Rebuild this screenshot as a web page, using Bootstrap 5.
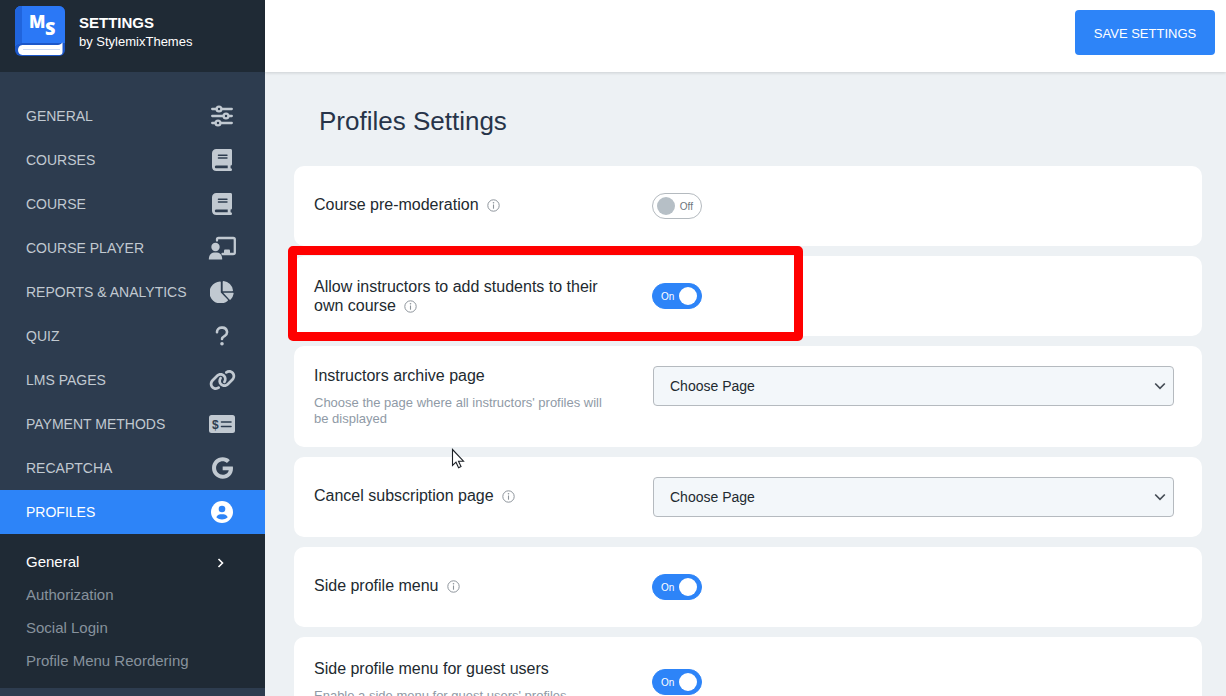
<!DOCTYPE html>
<html lang="en">
<head>
<meta charset="utf-8">
<meta name="viewport" content="width=device-width, initial-scale=1">
<title>Profiles Settings</title>
<link href="https://cdn.jsdelivr.net/npm/bootstrap@5.3.0/dist/css/bootstrap.min.css" rel="stylesheet">
<style>
  :root { --blue: #2d84f8; --side: #2d3c4f; --side-dark: #1f2a35; --muted: #c1c9d1; }
  body { font-family: "Liberation Sans", Arial, sans-serif; background: #edf1f4; color: #222a30; }

  .sidebar { width: 265px; background: var(--side); }
  .brand { height: 72px; background: var(--side-dark); color: #fff; padding: 6px 15px; gap: 14px; }
  .brand-text { padding-top: 7px; }
  .brand-title { font-size: 15px; line-height: 20px; font-weight: 700; margin: 0; }
  .brand-by { font-size: 13px; line-height: 18px; }
  .menu { padding-top: 22px; }
  .menu-link { height: 44px; padding: 0 28px 0 26px; font-size: 14px; color: var(--muted); text-decoration: none; }
  .menu-link.active { background: var(--blue); color: #fff; }
  .menu-icon { width: 30px; }
  .menu-icon svg, .brand svg, .tip svg, .pointer svg { display: block; }
  .submenu { background: var(--side-dark); padding: 12px 0 10px; }
  .submenu-link { height: 33px; padding: 0 40px 0 26px; font-size: 15px; color: #87929d; text-decoration: none; }
  .submenu-link.active { color: #fff; }

  .topbar { height: 72px; background: #fff; padding: 10px 11px; box-shadow: 0 1px 3px rgba(0, 0, 0, .14); z-index: 1; }
  .btn-save { width: 140px; height: 45px; background: var(--blue); color: #fff; font-size: 13px; border: 0; border-radius: 4px; padding: 2px 0 0; }
  .btn-save:hover { background: #1f74e4; color: #fff; }

  .content { padding: 34px 24px 0 29px; scrollbar-width: none; }
  .page-title { font-size: 26px; line-height: 30px; color: #273449; margin: 0 0 30px; padding-left: 25px; font-weight: 400; }
  .fields { gap: 10px; }
  .field { position: relative; display: grid; grid-template-columns: minmax(0, 304fr) minmax(0, 521fr); column-gap: 35px;
           align-items: center; min-height: 80px; padding: 20px 28px 20px 20px; background: #fff; border-radius: 10px; }
  .field-top { align-items: start; }
  .field-tall { padding-top: 22px; padding-bottom: 22px; }
  .field-label { display: block; font-size: 16px; line-height: 19px; }
  .label-single { margin-bottom: 3px; }
  .field-note { font-size: 13px; line-height: 16px; color: #8f9aa6; margin: 10px 0 0; }
  .tip { display: inline-block; vertical-align: -2px; margin-left: 4px; color: #8d949b; }

  .toggle { position: relative; display: block; width: 50px; height: 26px; margin-left: -1px; font-size: 10px; line-height: 27px; color: #6d757c; cursor: pointer; }
  .toggle-input { appearance: none; display: block; margin: 0; width: 50px; height: 26px; border-radius: 13px; border: 1px solid #b4babf; background: #fff; }
  .toggle-input::before { content: ""; display: block; width: 18px; height: 18px; margin: 3px 0 0 4px; border-radius: 50%; background: #b6bfc6; }
  .toggle-input:checked { background: var(--blue); border-color: var(--blue); }
  .toggle-input:checked::before { background: #fff; margin-left: 26px; }
  .toggle-text { position: absolute; top: 0; right: 9px; }
  .toggle-input:checked + .toggle-text { right: auto; left: 9px; color: #fff; }

  .page-select { height: 40px; font-size: 14px; padding: 0 36px 0 16px; color: #222a30; background-color: #f3f7fa; border: 1px solid #b5babf; border-radius: 4px;
    background-image: url("data:image/svg+xml,%3Csvg xmlns='http://www.w3.org/2000/svg' viewBox='0 0 12 12'%3E%3Cpath fill='none' stroke='%23454d55' stroke-width='1.7' d='M1.2 3.5 6 8.3l4.8-4.8'/%3E%3C/svg%3E");
    background-size: 12px 12px; background-position: right 7px center; }

  .marker { position: absolute; top: -10px; left: -6px; bottom: -5px; width: 515px; border: 9px solid #f00; border-radius: 5px; pointer-events: none; z-index: 2; }
  .pointer { position: absolute; left: 157px; top: 102px; z-index: 3; pointer-events: none; }
</style>
</head>
<body>
<svg width="0" height="0" class="position-absolute" aria-hidden="true">
  <symbol id="i-book" viewBox="0 0 448 512" preserveAspectRatio="none"><path fill="currentColor" d="M96 0C43 0 0 43 0 96V416c0 53 43 96 96 96H384h32c17.700 0 32-14.300 32-32s-14.300-32-32-32V384c17.700 0 32-14.300 32-32V32c0-17.700-14.300-32-32-32H384 96zm0 384H352v64H96c-17.700 0-32-14.300-32-32s14.300-32 32-32zm32-240c0-8.800 7.200-16 16-16H336c8.800 0 16 7.200 16 16s-7.200 16-16 16H144c-8.800 0-16-7.200-16-16zm16 48H336c8.800 0 16 7.200 16 16s-7.200 16-16 16H144c-8.800 0-16-7.200-16-16s7.200-16 16-16z"/></symbol>
  <symbol id="i-info" viewBox="0 0 13 13"><circle cx="6.500" cy="6.500" r="5.700" fill="none" stroke="currentColor"/><path d="M6.500 5.500v4.200" fill="none" stroke="currentColor" stroke-width="1.100"/><circle cx="6.500" cy="3.800" r=".8" fill="currentColor"/></symbol>
</svg>

<div class="d-flex vh-100 overflow-hidden">
  <aside class="sidebar flex-shrink-0 overflow-hidden">
    <div class="brand d-flex">
      <svg width="50" height="50" viewBox="0 0 50 50" aria-hidden="true">
        <rect width="50" height="50" rx="6" fill="#1c57c9"/>
        <path d="M6 0h38a6 6 0 0 1 6 6v31H7c-3 0-5 1-7 3V6a6 6 0 0 1 6-6z" fill="#2b78f6"/>
        <path d="M6 0h1v37c-3 0-5 1-7 3V6a6 6 0 0 1 6-6z" fill="#2064dc"/>
        <path d="M7.500 39H43c2 0 3-1 4.500-2.500V46c0 2-1 3-3 3h-37c-6 0-6-10 0-10z" fill="#fff"/>
        <path d="M8 43.500h37" stroke="#cfdcf5" stroke-width="1"/>
        <g font-family="Open Sans, sans-serif" font-weight="800" fill="#fff">
          <text x="14" y="22" font-size="17">M</text>
          <text x="30" y="29" font-size="18">S</text>
        </g>
      </svg>
      <div class="brand-text">
        <h2 class="brand-title">SETTINGS</h2>
        <div class="brand-by">by StylemixThemes</div>
      </div>
    </div>

    <nav class="menu" aria-label="Settings sections">
      <a class="menu-link d-flex align-items-center justify-content-between" href="#">GENERAL
        <span class="menu-icon d-flex justify-content-center"><svg width="22" height="22" viewBox="0 0 22 22" fill="none" stroke="currentColor" stroke-width="2.300" stroke-linecap="round"><path d="M1.200 4h4.300M11 4h9.800M1.200 11h11.300M18 11h2.800M1.200 18h3M10 18h10.800"/><circle cx="8" cy="4" r="2.400"/><circle cx="15" cy="11" r="2.400"/><circle cx="7" cy="18" r="2.400"/></svg></span></a>
      <a class="menu-link d-flex align-items-center justify-content-between" href="#">COURSES
        <span class="menu-icon d-flex justify-content-center"><svg width="20" height="22"><use href="#i-book"/></svg></span></a>
      <a class="menu-link d-flex align-items-center justify-content-between" href="#">COURSE
        <span class="menu-icon d-flex justify-content-center"><svg width="20" height="22"><use href="#i-book"/></svg></span></a>
      <a class="menu-link d-flex align-items-center justify-content-between" href="#">COURSE PLAYER
        <span class="menu-icon d-flex justify-content-center"><svg width="28" height="24" viewBox="0 0 28 24"><path d="M9 4.500V3.500A1.500 1.500 0 0 1 10.500 2H25.300A1.500 1.500 0 0 1 26.800 3.500V16.500A1.500 1.500 0 0 1 25.300 18H14.500" fill="none" stroke="currentColor" stroke-width="2.300" stroke-linecap="round"/><path d="M16 17v-2.500a1 1 0 0 1 1-1h4a1 1 0 0 1 1 1V17z" fill="currentColor"/><circle cx="7.500" cy="11" r="4.200" fill="currentColor"/><path d="M.8 23.500c0-4.500 2.500-7 5.200-7h3c3 0 5.200 2.500 5.200 7z" fill="currentColor"/></svg></span></a>
      <a class="menu-link d-flex align-items-center justify-content-between" href="#">REPORTS &amp; ANALYTICS
        <span class="menu-icon d-flex justify-content-center"><svg width="24" height="22" viewBox="0 0 24 22" fill="currentColor"><path d="M10.800 1.200V11.500L17.600 18.600C18.100 19.100 18 19.600 17.500 20A11 11 0 1 1 10 .5C10.500.4 10.800.7 10.800 1.200z"/><path d="M12.700.8C12.700.2 13.100 0 13.500 0A10.500 10.500 0 0 1 23 9.400C23 9.900 22.700 10.200 22.200 10.200H12.700z"/><path d="M13.200 11.800H22.900C23.400 11.800 23.700 12.200 23.600 12.700A11 11 0 0 1 20.700 18.500C20.300 18.900 19.800 18.900 19.400 18.500z"/></svg></span></a>
      <a class="menu-link d-flex align-items-center justify-content-between" href="#">QUIZ
        <span class="menu-icon d-flex justify-content-center"><svg width="14" height="20" viewBox="0 0 14 20"><path d="M2 6.200A4.500 4.500 0 0 1 6.200 1.600H7.800A4.400 4.400 0 0 1 9.800 9.800C8 10.800 7 11.400 7 13" fill="none" stroke="currentColor" stroke-width="2.600" stroke-linecap="round"/><circle cx="7" cy="17.800" r="1.800" fill="currentColor"/></svg></span></a>
      <a class="menu-link d-flex align-items-center justify-content-between" href="#">LMS PAGES
        <span class="menu-icon d-flex justify-content-center"><svg width="27" height="22" viewBox="0 0 640 512" fill="currentColor"><path d="M579.800 267.700c56.500-56.500 56.500-148 0-204.500c-50-50-128.800-56.500-186.300-15.400l-1.600 1.100c-14.400 10.300-17.700 30.300-7.400 44.600s30.300 17.700 44.600 7.400l1.600-1.100c32.100-22.900 76-19.300 103.800 8.600c31.500 31.500 31.500 82.500 0 114L422.300 334.800c-31.500 31.500-82.500 31.500-114 0c-27.900-27.900-31.500-71.800-8.600-103.800l1.100-1.600c10.300-14.400 6.900-34.400-7.400-44.600s-34.400-6.900-44.600 7.400l-1.100 1.600C206.500 251.200 213 330 263 380c56.500 56.500 148 56.500 204.500 0L579.800 267.700zM60.200 244.300c-56.500 56.500-56.500 148 0 204.500c50 50 128.800 56.500 186.300 15.400l1.600-1.100c14.400-10.300 17.700-30.300 7.400-44.600s-30.300-17.700-44.600-7.400l-1.600 1.100c-32.100 22.900-76 19.300-103.800-8.600C74 372 74 321 105.500 289.500L217.700 177.200c31.500-31.500 82.500-31.500 114 0c27.900 27.900 31.500 71.800 8.600 103.900l-1.100 1.600c-10.300 14.400-6.900 34.400 7.400 44.600s34.400 6.900 44.600-7.400l1.100-1.600C433.500 260.800 427 182 377 132c-56.500-56.500-148-56.500-204.500 0L60.200 244.300z"/></svg></span></a>
      <a class="menu-link d-flex align-items-center justify-content-between" href="#">PAYMENT METHODS
        <span class="menu-icon d-flex justify-content-center"><svg width="26" height="18" viewBox="0 0 26 18"><rect width="26" height="18" rx="2.500" fill="currentColor"/><text x="3" y="13.500" font-family="Liberation Sans, sans-serif" font-weight="700" font-size="12" fill="#2d3c4f">$</text><path d="M12.500 7h9.500M12.500 11.500h9.500" stroke="#2d3c4f" stroke-width="1.600" stroke-linecap="round"/></svg></span></a>
      <a class="menu-link d-flex align-items-center justify-content-between" href="#">RECAPTCHA
        <span class="menu-icon d-flex justify-content-center"><svg width="21" height="22" viewBox="0 0 488 512"><path fill="currentColor" d="M488 261.800C488 403.300 391.100 504 248 504 110.800 504 0 393.200 0 256S110.800 8 248 8c66.800 0 123 24.500 166.300 64.900l-67.500 64.900C258.500 52.600 94.300 116.600 94.300 256c0 86.500 69.100 156.600 153.700 156.600 98.200 0 135-70.400 140.800-106.900H248v-85.300h236.100c2.300 12.700 3.900 24.900 3.900 41.400z"/></svg></span></a>
      <a class="menu-link active d-flex align-items-center justify-content-between" href="#" aria-current="page">PROFILES
        <span class="menu-icon d-flex justify-content-center"><svg width="22" height="22" viewBox="0 0 22 22"><circle cx="11" cy="11" r="11" fill="currentColor"/><circle cx="11" cy="8" r="3.300" fill="#2d84f8"/><path d="M5.300 16.300C6.300 13.800 8.500 13.300 11 13.300s4.700.5 5.700 3C15 18 13 18.500 11 18.500s-4-.5-5.700-2.200z" fill="#2d84f8"/></svg></span></a>

      <div class="submenu">
        <a class="submenu-link active d-flex align-items-center justify-content-between" href="#">General
          <svg width="9" height="10" viewBox="0 0 9 10" fill="none" stroke="currentColor" stroke-width="1.600"><path d="M2.500 1l4 4-4 4"/></svg></a>
        <a class="submenu-link d-flex align-items-center" href="#">Authorization</a>
        <a class="submenu-link d-flex align-items-center" href="#">Social Login</a>
        <a class="submenu-link d-flex align-items-center" href="#">Profile Menu Reordering</a>
      </div>
    </nav>
  </aside>

  <div class="d-flex flex-column flex-grow-1">
    <header class="topbar d-flex justify-content-end flex-shrink-0">
      <button type="button" class="btn btn-save">SAVE SETTINGS</button>
    </header>

    <main class="content flex-grow-1 overflow-auto">
      <h1 class="page-title">Profiles Settings</h1>

      <form class="fields d-flex flex-column">
        <div class="field">
          <label class="field-label label-single" for="premoderation">Course pre-moderation <span class="tip"><svg width="13" height="13"><use href="#i-info"/></svg></span></label>
          <label class="toggle"><input class="toggle-input" type="checkbox" role="switch" id="premoderation"><span class="toggle-text">Off</span></label>
        </div>

        <div class="field">
          <label class="field-label" for="add-students">Allow instructors to add students to their own course <span class="tip"><svg width="13" height="13"><use href="#i-info"/></svg></span></label>
          <label class="toggle"><input class="toggle-input" type="checkbox" role="switch" id="add-students" checked><span class="toggle-text">On</span></label>
          <div class="marker"></div>
        </div>

        <div class="field field-top">
          <div>
            <label class="field-label" for="archive-page">Instructors archive page</label>
            <p class="field-note">Choose the page where all instructors' profiles will be displayed</p>
          </div>
          <select class="form-select page-select" id="archive-page"><option>Choose Page</option></select>
          <div class="pointer"><svg width="14" height="21" viewBox="0 0 14 21"><path d="M1.500 1.500V17.500L5 14.200 7.600 19.700 10 18.600 7.500 13.200H12.500z" fill="#fff" stroke="#1c2026" stroke-width="1.100"/></svg></div>
        </div>

        <div class="field">
          <label class="field-label label-single" for="cancel-page">Cancel subscription page <span class="tip"><svg width="13" height="13"><use href="#i-info"/></svg></span></label>
          <select class="form-select page-select" id="cancel-page"><option>Choose Page</option></select>
        </div>

        <div class="field">
          <label class="field-label label-single" for="side-menu">Side profile menu <span class="tip"><svg width="13" height="13"><use href="#i-info"/></svg></span></label>
          <label class="toggle"><input class="toggle-input" type="checkbox" role="switch" id="side-menu" checked><span class="toggle-text">On</span></label>
        </div>

        <div class="field field-tall">
          <div>
            <label class="field-label" for="guest-menu">Side profile menu for guest users</label>
            <p class="field-note">Enable a side menu for guest users' profiles</p>
          </div>
          <label class="toggle"><input class="toggle-input" type="checkbox" role="switch" id="guest-menu" checked><span class="toggle-text">On</span></label>
        </div>
      </form>
    </main>
  </div>
</div>

<script src="https://cdn.jsdelivr.net/npm/bootstrap@5.3.0/dist/js/bootstrap.bundle.min.js"></script>
<script>
  document.querySelectorAll('.toggle-input').forEach(function (box) {
    box.addEventListener('change', function () {
      box.nextElementSibling.textContent = box.checked ? 'On' : 'Off';
    });
  });
</script>
</body>
</html>
